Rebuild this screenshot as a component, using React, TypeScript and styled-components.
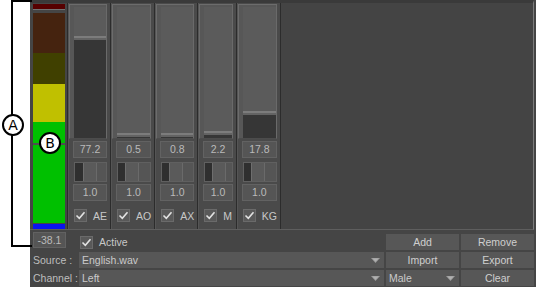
import React from "react";
import styled, { createGlobalStyle } from "styled-components";

const Global = createGlobalStyle`
  html, body { margin: 0; padding: 0; background: #ffffff; }
  body { font-family: "Liberation Sans", Arial, sans-serif; }
  * { box-sizing: border-box; }
`;

const Screen = styled.div`
  position: relative;
  display: flex;
  width: 536px;
  height: 287px;
  overflow: hidden;
  background: #ffffff;
`;

const Gutter = styled.div`
  flex: none;
  width: 30px;
  background: #ffffff;
`;

const Panel = styled.div`
  flex: 1;
  display: flex;
  flex-direction: column;
  background: #454545;
  padding-right: 3px;
`;

const MixerBox = styled.div`
  display: flex;
  height: 230px;
  border-top: 3px solid #3a3a3a;
  border-bottom: 1px solid #5e5e5e;
  border-right: 1px solid #7c7c7c;
`;

const MeterColumn = styled.div`
  flex: none;
  width: 37px;
  padding: 1px 0 0 3px;
`;

const Meter = styled.div`
  position: relative;
  width: 32px;
  display: flex;
  flex-direction: column;
`;

const Segment = styled.div<{ $h: number; $c: string; $gap?: number }>`
  height: ${(p) => p.$h}px;
  margin-top: ${(p) => p.$gap ?? 0}px;
  background: ${(p) => p.$c};
`;

const PeakClip = styled.div`
  height: 6px;
  background: #560000;
  border-bottom: 1px solid #727272;
`;

const PeakMarker = styled.div`
  position: absolute;
  left: 0;
  right: 0;
  top: 139px;
  height: 2px;
  background: #4e4e4e;
`;

const Strips = styled.div`
  flex: none;
  width: 214px;
  display: grid;
  grid-template-columns: repeat(5, 1fr);
  border-right: 1px solid #2c2c2c;
`;

const Strip = styled.div`
  display: flex;
  flex-direction: column;
  border-left: 1px solid #2c2c2c;
  background: #4a4a4a;
  box-shadow: inset 1px 0 0 #555555;
  padding: 1px 3px 0 5px;
`;

const Fader = styled.div`
  margin-left: -4px;
  height: 135px;
  background: #575757;
  border-top: 1px solid #6c6c6c;
  border-left: 1px solid #6c6c6c;
  border-right: 1px solid #6a6a6a;
  border-bottom: 1px solid #4c4c4c;
  padding: 2px 0 0 4px;
`;

const Track = styled.div`
  height: 131px;
  display: flex;
  flex-direction: column;
`;

const TrackTop = styled.div`
  flex: none;
  background: #5b5b5b;
`;

const FaderHandle = styled.div`
  flex: none;
  height: 4px;
  background: #636363;
  border-top: 2px solid #7c7c7c;
`;

const TrackFill = styled.div`
  flex: 1;
  background: #363636;
`;

const ValueBox = styled.div<{ $top: number }>`
  margin-top: ${(p) => p.$top}px;
  height: 17px;
  background: #555555;
  border: 1px solid #626262;
  color: #bababa;
  font-size: 10.5px;
  line-height: 15px;
  text-align: center;
`;

const PanSlider = styled.div`
  margin-top: 4px;
  margin-left: 1px;
  height: 20px;
  display: flex;
  background: #555555;
  border: 1px solid #606060;
`;

const PanLeft = styled.div`
  flex: none;
  background: #2f2f2f;
`;

const PanHandle = styled.div`
  flex: none;
  width: 14px;
  background: #5a5a5a;
  border-left: 1px solid #6e6e6e;
  border-right: 1px solid #6a6a6a;
`;

const PanRight = styled.div`
  flex: 1;
  background: #555555;
`;

const CheckRow = styled.div`
  margin-top: 6px;
  height: 17px;
  display: flex;
  align-items: center;
  gap: 6px;
  padding-left: 1px;
  color: #c8c8c8;
  font-size: 10.5px;
`;

const Box = styled.span`
  flex: none;
  width: 13px;
  height: 13px;
  display: inline-flex;
  align-items: center;
  justify-content: center;
  background: #595959;
  border: 1px solid #6a6a6a;
`;

const Empty = styled.div`
  flex: 1;
  background: #444444;
`;

const Controls = styled.div`
  display: grid;
  grid-template-columns: 44px 305px 73px 73px;
  grid-auto-rows: 16px;
  column-gap: 2px;
  row-gap: 2px;
  padding: 4px 0 0 3px;
  font-size: 10.5px;
  color: #c8c8c8;
`;

const StatusCell = styled.div`
  grid-column: 1 / 3;
  display: flex;
  align-items: center;
`;

const Readout = styled.div`
  width: 33px;
  height: 16px;
  margin-top: -4px;
  background: #555555;
  border: 1px solid #626262;
  color: #bababa;
  line-height: 14px;
  text-align: center;
`;

const ActiveCheck = styled.label`
  display: flex;
  align-items: center;
  gap: 6px;
  margin-left: 14px;
`;

const Button = styled.div`
  background: #575757;
  color: #cfcfcf;
  line-height: 16px;
  text-align: center;
`;

const FieldLabel = styled.div`
  line-height: 16px;
  color: #bdbdbd;
  white-space: nowrap;
`;

const Select = styled.div`
  position: relative;
  display: flex;
  align-items: center;
  justify-content: space-between;
  padding: 0 4px 0 3px;
  background: #575757;
  color: #cacaca;
  line-height: 16px;
`;

const Badge = styled.div<{ $x: number; $y: number }>`
  position: absolute;
  left: ${(p) => p.$x}px;
  top: ${(p) => p.$y}px;
  width: 22px;
  height: 22px;
  border-radius: 50%;
  border: 2px solid #000000;
  background: #ffffff;
  color: #000000;
  font-family: "DejaVu Sans", "Liberation Sans", sans-serif;
  font-size: 14px;
  line-height: 18px;
  text-align: center;
`;

const Bracket = styled.div`
  position: absolute;
  left: 11px;
  top: 0;
  width: 21px;
  height: 247px;
  border: 2px solid #000000;
  border-right: none;
`;

const Check = () => (
  <Box>
    <svg width="11" height="11" viewBox="0 0 11 11">
      <path d="M1.5 5.5 L4.3 8.3 L9.5 2.2" fill="none" stroke="#e2e2e2" strokeWidth="1.6" />
    </svg>
  </Box>
);

const Arrow = () => (
  <svg width="9" height="5" viewBox="0 0 9 5">
    <path d="M0 0 H9 L4.5 5 Z" fill="#9a9a9a" />
    <path d="M1.5 0.5 H7.5 L4.5 3.8 Z" fill="#b0b0b0" />
  </svg>
);

const strips = [
  { label: "AE", level: 77.2, pan: 8 },
  { label: "AO", level: 0.5, pan: 7 },
  { label: "AX", level: 0.8, pan: 7 },
  { label: "M", level: 2.2, pan: 7 },
  { label: "KG", level: 17.8, pan: 7 },
];

export default function App() {
  return (
    <>
      <Global />
      <Screen>
        <Gutter />
        <Panel>
          <MixerBox>
            <MeterColumn>
              <Meter>
                <PeakClip />
                <Segment $gap={3} $h={40} $c="#45230f" />
                <Segment $h={31} $c="#404000" />
                <Segment $h={38} $c="#c0c000" />
                <Segment $h={101} $c="#00c000" />
                <Segment $gap={1} $h={5} $c="#0a14f0" />
                <PeakMarker />
              </Meter>
            </MeterColumn>
            <Strips>
              {strips.map((s) => (
                <Strip key={s.label}>
                  <Fader>
                    <Track>
                      <TrackTop style={{ height: Math.round((100 - s.level) * 1.27) }} />
                      <FaderHandle />
                      <TrackFill />
                    </Track>
                  </Fader>
                  <ValueBox $top={2}>{s.level.toFixed(1)}</ValueBox>
                  <PanSlider>
                    <PanLeft style={{ width: s.pan }} />
                    <PanHandle />
                    <PanRight />
                  </PanSlider>
                  <ValueBox $top={2}>1.0</ValueBox>
                  <CheckRow>
                    <Check />
                    <span>{s.label}</span>
                  </CheckRow>
                </Strip>
              ))}
            </Strips>
            <Empty />
          </MixerBox>
          <Controls>
            <StatusCell>
              <Readout>-38.1</Readout>
              <ActiveCheck>
                <Check />
                <span>Active</span>
              </ActiveCheck>
            </StatusCell>
            <Button>Add</Button>
            <Button>Remove</Button>
            <FieldLabel>Source :</FieldLabel>
            <Select>
              <span>English.wav</span>
              <Arrow />
            </Select>
            <Button>Import</Button>
            <Button>Export</Button>
            <FieldLabel>Channel :</FieldLabel>
            <Select>
              <span>Left</span>
              <Arrow />
            </Select>
            <Select>
              <span>Male</span>
              <Arrow />
            </Select>
            <Button>Clear</Button>
          </Controls>
        </Panel>
        <Bracket />
        <Badge $x={2} $y={114}>A</Badge>
        <Badge $x={39} $y={132}>B</Badge>
      </Screen>
    </>
  );
}
